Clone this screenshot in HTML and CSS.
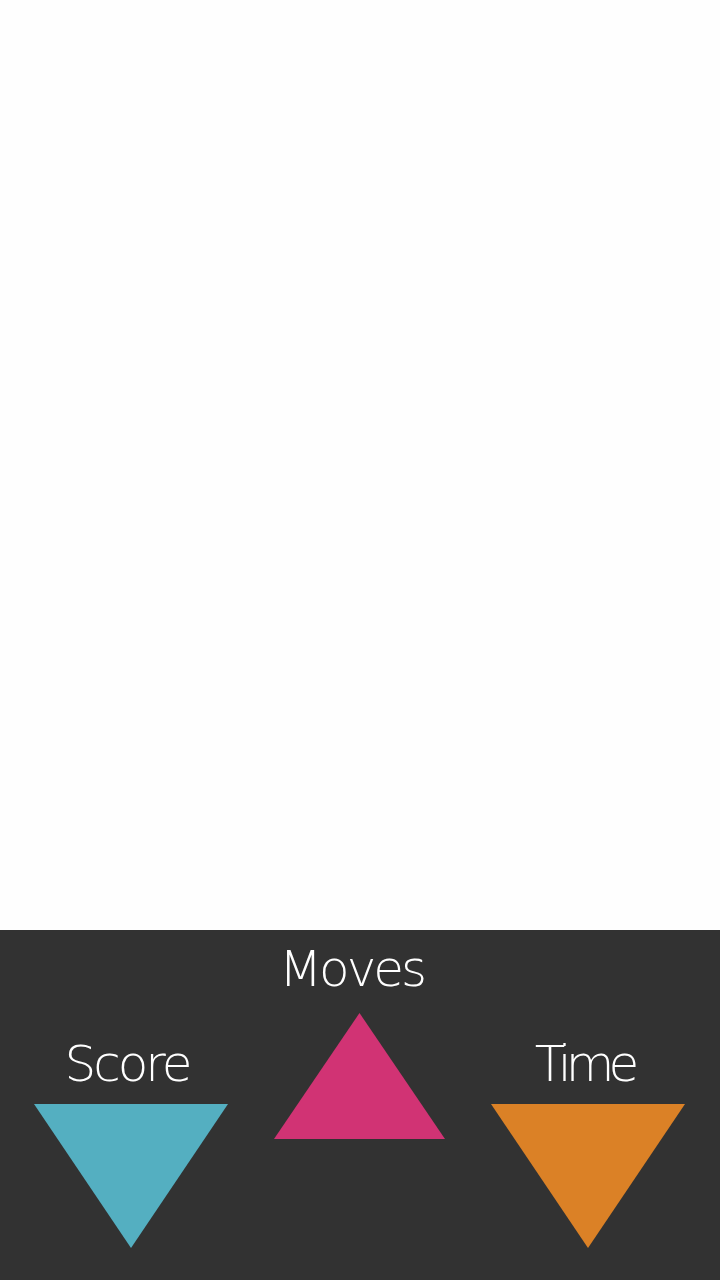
FILE: index.html
```html
<!DOCTYPE html>
<html>
<head>
<meta charset="utf-8">
<link rel="stylesheet" href="styles.css">
</head>
<body>
<div class="screen">
  <div class="board"></div>
  <div class="panel">
    <div class="col side">
      <div class="label score">Score</div>
      <svg class="tri" width="194" height="144" viewBox="0 0 194 144"><polygon points="0,0 194,0 97,144" fill="#54afc1"/></svg>
    </div>
    <div class="col mid">
      <div class="label">Moves</div>
      <svg class="tri" width="171" height="126" viewBox="0 0 171 126"><polygon points="85.5,0 171,126 0,126" fill="#d13374"/></svg>
    </div>
    <div class="col side">
      <div class="label time">Time</div>
      <svg class="tri" width="194" height="144" viewBox="0 0 194 144"><polygon points="0,0 194,0 97,144" fill="#db8126"/></svg>
    </div>
  </div>
</div>
</body>
</html>
```
FILE: styles.css
```css
html, body {
  margin: 0;
  padding: 0;
}
body {
  width: 720px;
  height: 1280px;
  overflow: hidden;
  font-family: "DejaVu Sans", sans-serif;
}
.screen {
  display: flex;
  flex-direction: column;
  height: 1280px;
}
.board {
  height: 930px;
  background: #fefefe;
}
.panel {
  flex: 1;
  background: #323232;
  display: grid;
  grid-template-columns: 194px 171px 194px;
  column-gap: 46px;
  padding-left: 34px;
  align-items: start;
}
.col {
  display: flex;
  flex-direction: column;
  align-items: center;
}
.label {
  color: #fff;
  font-weight: 200;
  font-size: 50px;
  line-height: 50px;
  letter-spacing: -3px;
  white-space: nowrap;
}
.tri {
  display: block;
}
.side {
  padding-top: 109px;
}
.side .label {
  margin-bottom: 15px;
}
.score {
  margin-left: -8px;
}
.time {
  margin-left: -8px;
  letter-spacing: -6px;
}
.mid {
  padding-top: 14px;
}
.mid .label {
  margin-left: -16px;
  margin-bottom: 19px;
}
```
